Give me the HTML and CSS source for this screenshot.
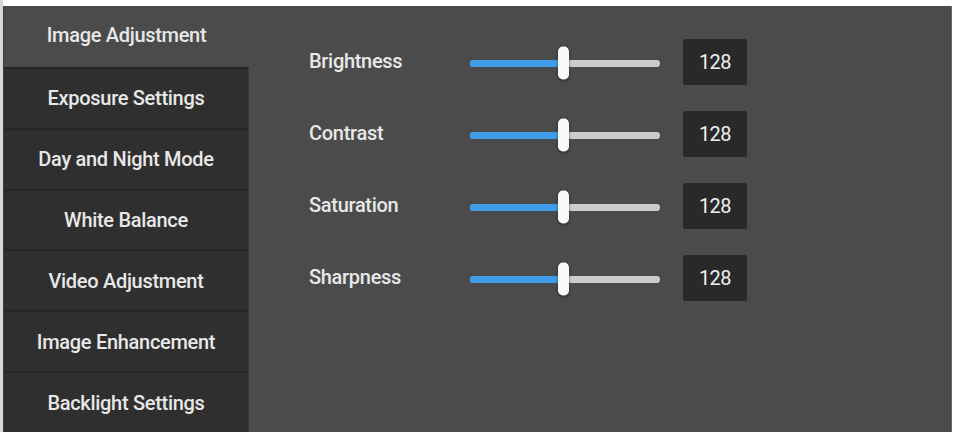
FILE: index.html
```html
<!DOCTYPE html>
<html>
<head>
<meta charset="utf-8">
<link rel="stylesheet" href="styles.css">
</head>
<body>
<div class="frame">
  <div class="panel">
    <nav class="sidebar">
      <div class="item active">Image Adjustment</div>
      <div class="item">Exposure Settings</div>
      <div class="item">Day and Night Mode</div>
      <div class="item">White Balance</div>
      <div class="item">Video Adjustment</div>
      <div class="item">Image Enhancement</div>
      <div class="item">Backlight Settings</div>
    </nav>
    <main class="content">
      <div class="row">
        <div class="label">Brightness</div>
        <div class="slider"><div class="fill" style="width:49%"></div><div class="thumb" style="left:49%"></div></div>
        <div class="value">128</div>
      </div>
      <div class="row">
        <div class="label">Contrast</div>
        <div class="slider"><div class="fill" style="width:49%"></div><div class="thumb" style="left:49%"></div></div>
        <div class="value">128</div>
      </div>
      <div class="row">
        <div class="label">Saturation</div>
        <div class="slider"><div class="fill" style="width:49%"></div><div class="thumb" style="left:49%"></div></div>
        <div class="value">128</div>
      </div>
      <div class="row">
        <div class="label">Sharpness</div>
        <div class="slider"><div class="fill" style="width:49%"></div><div class="thumb" style="left:49%"></div></div>
        <div class="value">128</div>
      </div>
    </main>
  </div>
</div>
</body>
</html>
```
FILE: styles.css
```css
html, body {
  margin: 0;
  padding: 0;
  background: #ffffff;
}
body {
  width: 954px;
  height: 432px;
  overflow: hidden;
  font-family: Roboto, "Liberation Sans", Arial, sans-serif;
}
.frame {
  padding: 6px 2px 0 0;
  height: 426px;
  background: linear-gradient(to right, #d8d8d8 0, #d8d8d8 3px, #ffffff 3px);
}
.panel {
  display: flex;
  height: 426px;
  margin-left: 3px;
  background: #4b4b4b;
  border-right: 1px solid #6a6a6a;
}
.sidebar {
  width: 245px;
  display: flex;
  flex-direction: column;
  border-left: 1px solid #3a3a3a;
}
.item {
  flex: 1;
  display: flex;
  align-items: center;
  justify-content: center;
  background: #2f2f2f;
  color: #e8e8e8;
  font-size: 20px;
  font-weight: 500;
  letter-spacing: -0.3px;
  border-top: 2px solid #262626;
  border-right: 1px solid #3c3c3c;
}
.item.active {
  background: #4b4b4b;
  border-top: none;
  border-right: none;
  padding-bottom: 2px;
}
.content {
  flex: 1;
  display: flex;
  flex-direction: column;
  gap: 26px;
  padding: 33px 0 0 60px;
}
.row {
  display: flex;
  align-items: center;
  height: 46px;
}
.label {
  width: 161px;
  color: #e8e8e8;
  font-size: 20px;
  font-weight: 500;
  letter-spacing: -0.3px;
  margin-top: -3px;
}
.slider {
  position: relative;
  width: 190px;
  height: 7px;
  border-radius: 4px;
  background: #cdcdcd;
  margin-top: 2px;
}
.fill {
  height: 100%;
  border-radius: 4px 0 0 4px;
  background: #3d9be9;
}
.thumb {
  position: absolute;
  top: 50%;
  width: 11px;
  height: 33px;
  margin-left: -5px;
  transform: translateY(-50%);
  border-radius: 5px;
  background: #fafafa;
  box-shadow: 0 1px 3px rgba(0,0,0,0.5);
}
.value {
  margin-left: 23px;
  width: 64px;
  height: 46px;
  display: flex;
  align-items: center;
  justify-content: center;
  background: #292929;
  border-radius: 2px;
  color: #f0f0f0;
  font-size: 20px;
  letter-spacing: -0.5px;
}
```
